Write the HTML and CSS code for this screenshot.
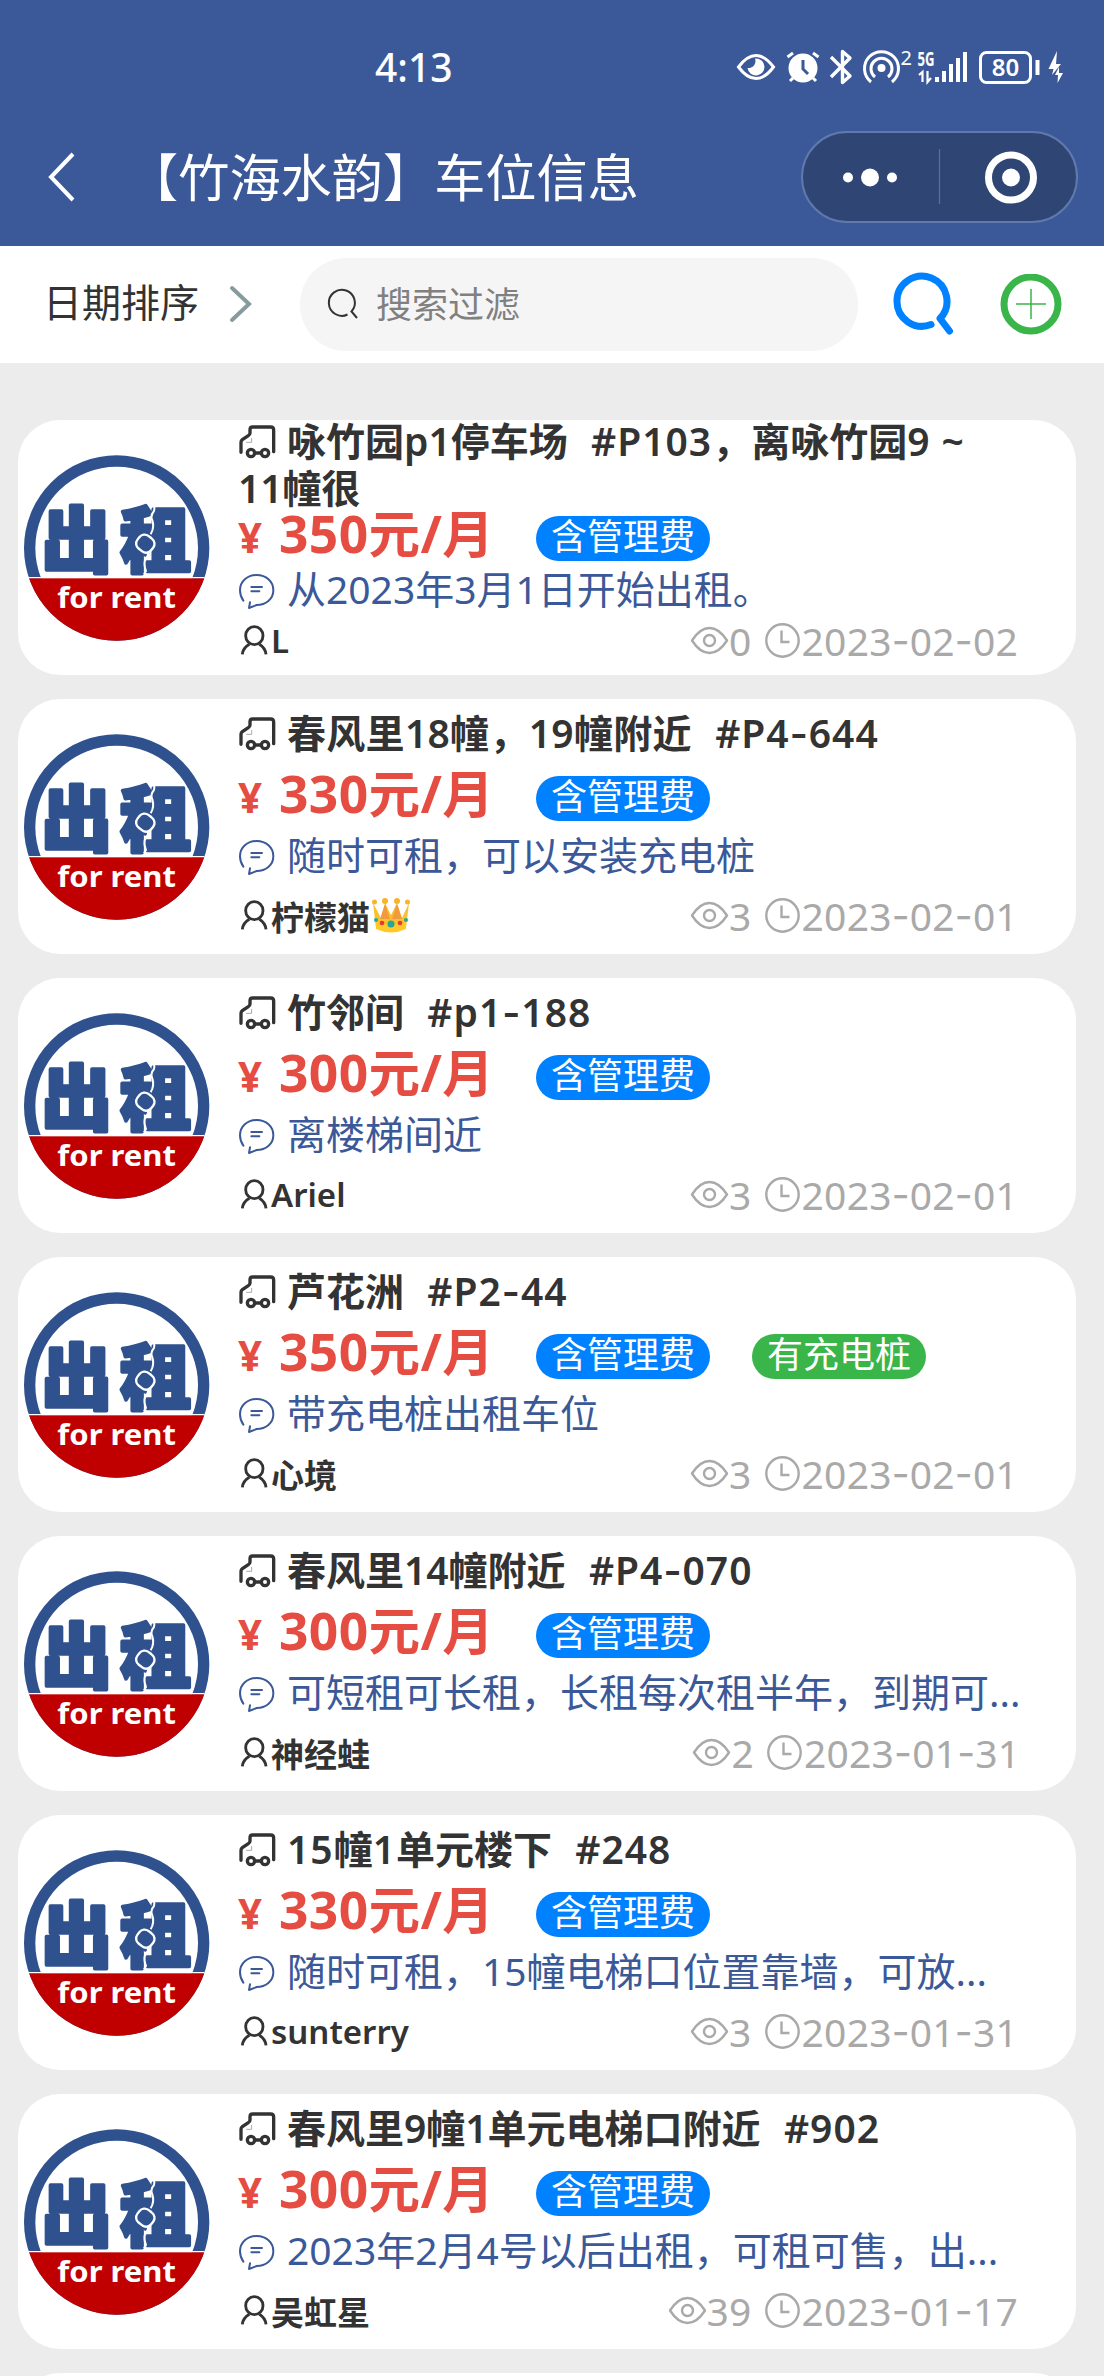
FILE: index.html
```html
<!DOCTYPE html>
<html lang="zh-CN">
<head>
<meta charset="utf-8">
<title>【竹海水韵】车位信息</title>
<link rel="stylesheet" href="styles.css">
</head>
<body>
<svg class="defs" width="0" height="0" aria-hidden="true">
  <symbol id="logo" viewBox="12 44 558 558">
    <clipPath id="disc"><circle cx="290" cy="323" r="278"/></clipPath>
    <circle cx="290" cy="323" r="261" fill="#fff" stroke="#2f528f" stroke-width="34"/>
    <rect x="12" y="410" width="558" height="5" fill="#fff" clip-path="url(#disc)"/>
    <rect x="12" y="414" width="558" height="190" fill="#c00000" clip-path="url(#disc)"/>
    <g class="logo-cn"><text x="64" y="376">出</text><text x="301" y="376">租</text></g>
    <path d="M384 186Q408 192 402 212Q390 226 397 240Q404 262 392 282M384 334Q386 348 376 356Q370 372 378 392L372 402" fill="none" stroke="#fff" stroke-width="6"/>
    <rect x="350" y="286" width="52" height="48" rx="19" transform="rotate(38 376 310)" fill="#2f528f" stroke="#fff" stroke-width="7"/>
    <text class="logo-en" x="112" y="502" textLength="356" lengthAdjust="spacingAndGlyphs">for rent</text>
  </symbol>
  <symbol id="van" viewBox="24 20 117 117">
    <g fill="none" stroke="#333" stroke-width="10" stroke-linecap="round">
      <path d="M33 108V78Q33 73 37 70L55 58Q60 55 60 50V40Q60 32 68 32H122Q131 32 131 41V106"/>
      <circle cx="63" cy="110" r="11"/><circle cx="105" cy="110" r="11"/><path d="M75 110H93"/>
      <path d="M65 66V78H50" stroke="#aaa" stroke-width="3"/>
    </g>
  </symbol>
  <symbol id="chat" viewBox="24 462 117 117">
    <path d="M40 551Q30 537 30 520C30 493 52 474 80 474S130 493 130 520S107 564 80 564Q72 567 57 573L60 556M64 510H96M64 523H88" fill="none" stroke="#3b5998" stroke-width="6" stroke-linecap="round" stroke-linejoin="round"/>
  </symbol>
  <symbol id="user" viewBox="24 630 99 99">
    <path d="M37 721Q39 702 58 691M88 691Q106 702 108 721" fill="none" stroke="#333" stroke-width="8.500"/>
    <ellipse cx="73" cy="665" rx="26" ry="27" fill="none" stroke="#333" stroke-width="8.500"/>
  </symbol>
  <symbol id="eye" viewBox="0 0 39 39">
    <g fill="none" stroke="#a9a9a9" stroke-width="2.400"><path d="M2 19.500Q10 7 19.500 7T37 19.500Q29 32 19.500 32T2 19.500Z" stroke-linejoin="round"/><circle cx="19.500" cy="19.500" r="5.500"/></g>
  </symbol>
  <symbol id="clock" viewBox="0 0 39 39">
    <g fill="none" stroke="#a9a9a9" stroke-width="2.400"><circle cx="19.500" cy="19.500" r="16.200"/><path d="M18.500 9.500V21H26.500"/></g>
  </symbol>
</svg>

<header class="header">
  <div class="status">
    <span class="time">4:13</span>
    <svg class="status-icons" width="332" height="40" viewBox="735 47 332 40" fill="none" stroke="#fff">
      <path d="M738.500 67Q747 55.500 756 55.500T773.500 67Q765 78.500 756 78.500T738.500 67Z" stroke-width="3"/>
      <path d="M755 58.500A8.500 8.500 0 1 1 747.500 68A7 7 0 0 0 755 58.500Z" fill="#fff" stroke="none"/>
      <g><circle cx="803" cy="68" r="14.500" fill="#fff" stroke="none"/><path d="M803 60V69L808 74" stroke="#3b5998" stroke-width="3"/><path d="M787.500 57L793 53M818.500 57L813 53M793 78L790 81M813 78L816 81" stroke-width="3"/></g>
      <path d="M831 57L850 76L842.500 82.500V51.500L850 58L831 77" stroke-width="3.400" stroke-linejoin="round"/>
      <g stroke-width="3"><circle cx="881.500" cy="68" r="4" fill="#fff" stroke="none"/><path d="M871 82A17 17 0 1 1 892 82M875 77A10.500 10.500 0 1 1 888 77"/></g>
      <text x="900.500" y="65" class="s2">2</text>
      <text x="917.500" y="65.500" class="s5g" textLength="17" lengthAdjust="spacingAndGlyphs">5G</text>
      <path d="M922.500 82V72L919 75M927.500 71V82L931 78" stroke-width="2.200"/>
      <path d="M937 77V82M944 71V82M951 64V82M958 58V82M965 52V82" stroke-width="4"/>
      <rect x="980.500" y="52.500" width="50" height="30" rx="6" stroke-width="3"/>
      <path d="M1037.500 60V75" stroke-width="4"/>
      <text x="1005.500" y="76" class="s80" text-anchor="middle">80</text>
      <path d="M1057 51L1048.500 69H1053.500L1052 75L1061 64H1056Z" fill="#fff" stroke="none"/>
      <path d="M1059 67L1055 75H1058L1057.500 83L1063 73H1059Z" fill="#fff" stroke="none"/>
    </svg>
  </div>
  <div class="nav">
    <svg class="back" width="30" height="54" viewBox="0 0 30 54"><path d="M26 4L4 27L26 50" fill="none" stroke="#fff" stroke-width="4"/></svg>
    <h1 class="nav-title">【竹海水韵】车位信息</h1>
    <div class="capsule">
      <svg width="273" height="88" viewBox="803 133 273 88"><g fill="#fff"><circle cx="848" cy="177.500" r="5"/><circle cx="870" cy="177.500" r="9"/><circle cx="892" cy="177.500" r="5"/><circle cx="1011" cy="177.500" r="9"/></g><circle cx="1011" cy="177.500" r="22.500" fill="none" stroke="#fff" stroke-width="7"/><path d="M939.500 149V204" stroke="#5a70a0" stroke-width="1.200"/></svg>
    </div>
  </div>
</header>

<div class="toolbar">
  <span class="sort">日期排序</span>
  <svg class="sort-arrow" width="26" height="42" viewBox="0 0 26 42"><path d="M4 4L21 20L4 36" fill="none" stroke="#879a9f" stroke-width="4" stroke-linecap="round"/></svg>
  <div class="search">
    <svg width="36" height="36" viewBox="325 286 36 36"><path d="M347.500 313.500A13 13 0 1 1 351.500 310.500L357 317" fill="none" stroke="#333" stroke-width="2"/></svg>
    <span class="placeholder">搜索过滤</span>
  </div>
  <svg class="find" width="66" height="66" viewBox="889 271 66 66"><path d="M931 323.500A25 25 0 1 1 940 317.500L949.500 330" fill="none" stroke="#0081ff" stroke-width="7" stroke-linecap="round" stroke-linejoin="round"/></svg>
  <svg class="add" width="62" height="62" viewBox="0 1 62 62"><g fill="none" stroke="#39b54a"><circle cx="31" cy="31" r="27" stroke-width="7"/><path d="M16 31H46M31 16V46" stroke-width="1.500"/></g></svg>
</div>

<main class="list">
  <article class="card card-tall">
    <svg class="logo"><use href="#logo"/></svg>
    <div class="body">
      <h2 class="title"><svg class="i39"><use href="#van"/></svg>咏竹园p1停车场&nbsp; <span class="no">#P103</span>，离咏竹园9<span class="tilde">~</span><br>11幢很</h2>
      <div class="price"><span class="yen">¥</span><span class="amount">350元/月</span><span class="tag">含管理费</span></div>
      <div class="desc"><svg class="i39"><use href="#chat"/></svg>从2023年3月1日开始出租。</div>
      <div class="meta"><span class="author"><svg class="i33"><use href="#user"/></svg>L</span><span class="info"><svg class="i39"><use href="#eye"/></svg>0<svg class="i39 clock"><use href="#clock"/></svg>2023<i>-</i>02<i>-</i>02</span></div>
    </div>
  </article>
  <article class="card">
    <svg class="logo"><use href="#logo"/></svg>
    <div class="body">
      <h2 class="title"><svg class="i39"><use href="#van"/></svg><span class="n">春风里18幢，19幢附近</span>&nbsp; <span class="no">#P4<i>-</i>644</span></h2>
      <div class="price"><span class="yen">¥</span><span class="amount">330元/月</span><span class="tag">含管理费</span></div>
      <div class="desc"><svg class="i39"><use href="#chat"/></svg>随时可租，可以安装充电桩</div>
      <div class="meta"><span class="author"><svg class="i33"><use href="#user"/></svg>柠檬猫<svg class="crown" viewBox="0 0 38 36"><path d="M1 5L9 20L13 5L19 17L25 5L30 20L37 5L34 30Q19 38 4 30Z" fill="#fbc02d"/><path d="M8 21L13 6L18 21ZM20 21L25 6L30 21Z" fill="#f19a3e"/><path d="M4 23Q19 31 34 23V31Q19 38 4 31Z" fill="#ffca28"/><g fill="#f7b52c"><circle cx="2.500" cy="4" r="2.500"/><circle cx="13" cy="3" r="3"/><circle cx="25" cy="3" r="3"/><circle cx="35.500" cy="4" r="2.500"/></g><circle cx="19" cy="26" r="3.500" fill="#26a69a"/><circle cx="10" cy="25" r="2.300" fill="#e53935"/><circle cx="28" cy="25" r="2.300" fill="#e53935"/><circle cx="4" cy="22" r="2" fill="#26a69a"/><circle cx="34" cy="22" r="2" fill="#26a69a"/></svg></span><span class="info"><svg class="i39"><use href="#eye"/></svg>3<svg class="i39 clock"><use href="#clock"/></svg>2023<i>-</i>02<i>-</i>01</span></div>
    </div>
  </article>
  <article class="card">
    <svg class="logo"><use href="#logo"/></svg>
    <div class="body">
      <h2 class="title"><svg class="i39"><use href="#van"/></svg>竹邻间&nbsp; <span class="no">#p1<i>-</i>188</span></h2>
      <div class="price"><span class="yen">¥</span><span class="amount">300元/月</span><span class="tag">含管理费</span></div>
      <div class="desc"><svg class="i39"><use href="#chat"/></svg>离楼梯间近</div>
      <div class="meta"><span class="author"><svg class="i33"><use href="#user"/></svg>Ariel</span><span class="info"><svg class="i39"><use href="#eye"/></svg>3<svg class="i39 clock"><use href="#clock"/></svg>2023<i>-</i>02<i>-</i>01</span></div>
    </div>
  </article>
  <article class="card">
    <svg class="logo"><use href="#logo"/></svg>
    <div class="body">
      <h2 class="title"><svg class="i39"><use href="#van"/></svg>芦花洲&nbsp; <span class="no">#P2<i>-</i>44</span></h2>
      <div class="price"><span class="yen">¥</span><span class="amount">350元/月</span><span class="tag">含管理费</span><span class="tag tag-green">有充电桩</span></div>
      <div class="desc"><svg class="i39"><use href="#chat"/></svg>带充电桩出租车位</div>
      <div class="meta"><span class="author"><svg class="i33"><use href="#user"/></svg>心境</span><span class="info"><svg class="i39"><use href="#eye"/></svg>3<svg class="i39 clock"><use href="#clock"/></svg>2023<i>-</i>02<i>-</i>01</span></div>
    </div>
  </article>
  <article class="card">
    <svg class="logo"><use href="#logo"/></svg>
    <div class="body">
      <h2 class="title"><svg class="i39"><use href="#van"/></svg>春风里14幢附近&nbsp; <span class="no">#P4<i>-</i>070</span></h2>
      <div class="price"><span class="yen">¥</span><span class="amount">300元/月</span><span class="tag">含管理费</span></div>
      <div class="desc"><svg class="i39"><use href="#chat"/></svg>可短租可长租，长租每次租半年，到期可...</div>
      <div class="meta"><span class="author"><svg class="i33"><use href="#user"/></svg>神经蛙</span><span class="info"><svg class="i39"><use href="#eye"/></svg>2<svg class="i39 clock"><use href="#clock"/></svg>2023<i>-</i>01<i>-</i>31</span></div>
    </div>
  </article>
  <article class="card">
    <svg class="logo"><use href="#logo"/></svg>
    <div class="body">
      <h2 class="title"><svg class="i39"><use href="#van"/></svg><span class="no">15</span>幢<span class="no">1</span>单元楼下&nbsp; <span class="no">#248</span></h2>
      <div class="price"><span class="yen">¥</span><span class="amount">330元/月</span><span class="tag">含管理费</span></div>
      <div class="desc"><svg class="i39"><use href="#chat"/></svg>随时可租，15幢电梯口位置靠墙，可放...</div>
      <div class="meta"><span class="author"><svg class="i33"><use href="#user"/></svg>sunterry</span><span class="info"><svg class="i39"><use href="#eye"/></svg>3<svg class="i39 clock"><use href="#clock"/></svg>2023<i>-</i>01<i>-</i>31</span></div>
    </div>
  </article>
  <article class="card">
    <svg class="logo"><use href="#logo"/></svg>
    <div class="body">
      <h2 class="title"><svg class="i39"><use href="#van"/></svg>春风里9幢1单元电梯口附近&nbsp; <span class="no">#902</span></h2>
      <div class="price"><span class="yen">¥</span><span class="amount">300元/月</span><span class="tag">含管理费</span></div>
      <div class="desc"><svg class="i39"><use href="#chat"/></svg>2023年2月4号以后出租，可租可售，出...</div>
      <div class="meta"><span class="author"><svg class="i33"><use href="#user"/></svg>吴虹星</span><span class="info"><svg class="i39"><use href="#eye"/></svg>39<svg class="i39 clock"><use href="#clock"/></svg>2023<i>-</i>01<i>-</i>17</span></div>
    </div>
  </article>
  <article class="card"></article>
</main>
</body>
</html>
```
FILE: styles.css
```css
* { box-sizing: border-box; }
body {
  margin: 0;
  width: 1104px;
  height: 2376px;
  overflow: hidden;
  background: #ececec;
  color: #333;
  font-family: "Noto Sans", "Noto Sans CJK SC", sans-serif;
}
svg { display: block; flex: none; }
.defs { position: absolute; }
i { font-style: normal; font-family: Inter, sans-serif; }

/* header */
.header { height: 246px; background: #3b5998; color: #fff; }
.status { height: 131px; padding: 47px 37px 0 375px; display: flex; justify-content: space-between; }
.time { font-size: 39px; line-height: 40px; font-weight: 500; white-space: nowrap; }
.s2 { font: 20px "Noto Sans"; fill: #fff; stroke: none; }
.s5g { font: bold 19px "Noto Sans"; fill: #fff; stroke: none; }
.s80 { font: 600 24px "Noto Sans"; fill: #fff; stroke: none; }
.nav { height: 92px; padding: 0 26px 0 47px; display: flex; align-items: center; }
.nav-title { margin: 0 auto 0 50px; font-size: 51.2px; line-height: 60px; font-weight: 400; white-space: nowrap; }
.capsule { width: 277px; height: 92px; border: 2px solid #6079ad; border-radius: 46px; background: #2f4675; }

/* toolbar */
.toolbar { height: 117px; padding: 0 42px 0 43px; background: #fff; display: flex; align-items: center; font-size: 39px; }
.sort { width: 157px; line-height: 50px; padding-bottom: 5px; white-space: nowrap; }
.sort-arrow { margin-left: 28px; }
.search { width: 558px; height: 93px; margin-left: 46px; padding-left: 25px; border-radius: 46px; background: #f5f5f5; display: flex; align-items: center; gap: 15px; font-size: 36px; color: #808080; }
.placeholder { padding-bottom: 4px; }
.find { margin-left: 31px; }
.add { margin-left: auto; }

/* listing */
.list { height: 2013px; overflow: hidden; padding: 57px 28px 0 18px; display: flex; flex-direction: column; gap: 24px; }
.card { flex: none; height: 255px; padding-left: 6px; border-radius: 42px; background: #fff; display: flex; align-items: flex-start; }
.logo { width: 186px; height: 186px; margin-top: 35px; }
.logo-cn { font: 900 213px "Noto Sans CJK SC"; fill: #2f528f; stroke: #2f528f; stroke-width: 11; stroke-linejoin: round; }
.logo-en { font: bold 88px "Noto Sans"; fill: #fff; }
.body { width: 780px; margin-left: 28px; padding-top: 3px; display: grid; grid-template-rows: repeat(4, 61px); white-space: nowrap; }
.title { margin: 0; font-size: 39px; line-height: 61px; font-weight: 600; word-spacing: 1.5px; }
.no { letter-spacing: 1px; }
.n { letter-spacing: .3px; }
.i39 { display: inline-block; width: 39px; height: 39px; vertical-align: -6px; }
.title .i39, .desc .i39 { margin-right: 10px; }
.tilde { margin-left: 12px; }
.price { display: flex; align-items: center; color: #e54d42; font-weight: 700; }
.yen { width: 41px; font-size: 42px; line-height: 61px; padding-top: 6px; }
.amount { width: 257px; font-size: 51.5px; line-height: 61px; letter-spacing: .4px; }
.tag { width: 174px; height: 45px; margin: 9px 42px 0 0; border-radius: 23px; background: #0081ff; color: #fff; font-size: 36px; line-height: 42px; font-weight: 400; text-align: center; }
.tag-green { background: #39b54a; }
.desc { font-size: 39px; line-height: 61px; color: #3b5998; }
.meta { display: flex; align-items: center; justify-content: space-between; }
.author { display: flex; align-items: center; font-size: 33px; font-weight: 600; }
.i33 { width: 33px; height: 33px; }
.crown { width: 38px; height: 36px; margin-left: 2px; }
.info { display: flex; align-items: center; font-size: 39px; letter-spacing: .2px; color: #a9a9a9; }
.clock { margin-left: 11px; }
.card-tall .body { margin-top: -3px; padding-top: 0; grid-template-rows: 94px 45px 65px 39px; }
.card-tall .title { line-height: 47px; }
.card-tall .desc { line-height: 65px; }
.card-tall .yen, .card-tall .amount { line-height: 45px; }
```
